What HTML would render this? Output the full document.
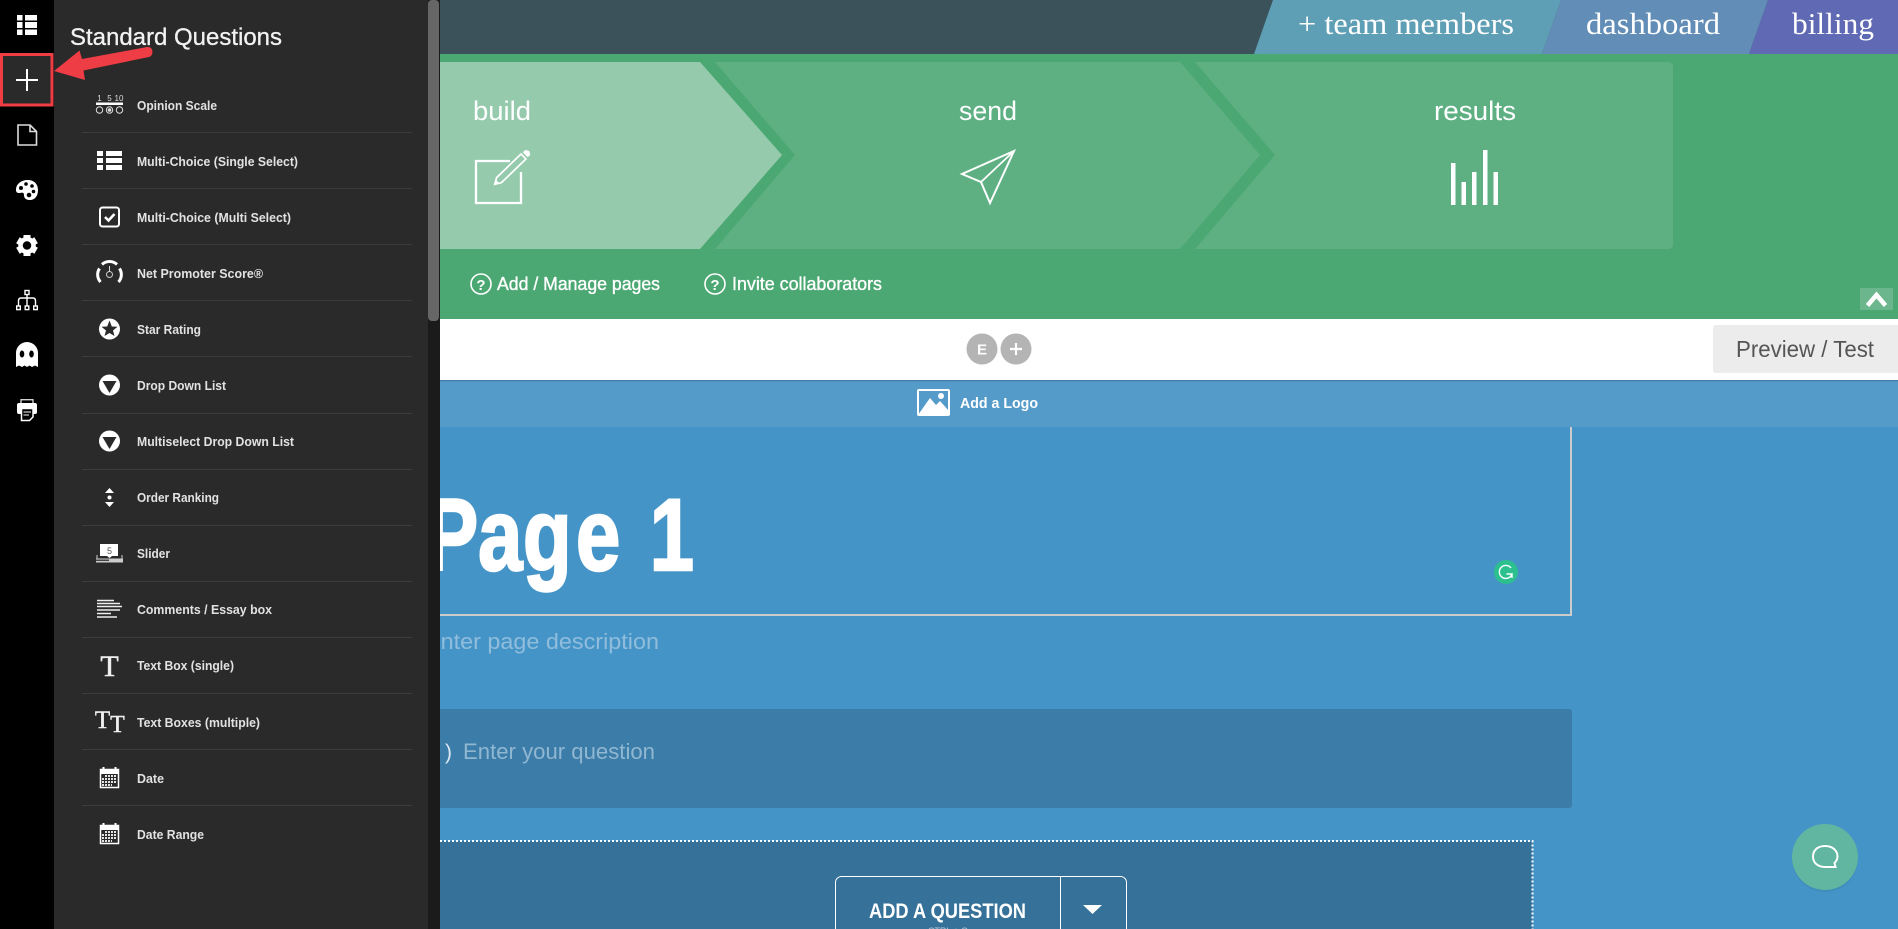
<!DOCTYPE html>
<html lang="en"><head><meta charset="utf-8"><title>Survey builder</title>
<style>
html,body{margin:0;padding:0;width:1898px;height:929px;overflow:hidden;background:#4594c7}
svg{display:block}
text{font-family:"Liberation Sans",Arial,sans-serif}
.s{font-family:"Liberation Serif",serif}
.i{font-size:13px;fill:#e2e2e2;font-weight:bold}
.l{stroke:#3d3d3d;stroke-width:1}
.w{fill:#fff}
</style></head><body>
<svg width="1898" height="929" viewBox="0 0 1898 929">
<rect width="1898" height="929" fill="#4594c7"/>
<!-- top nav -->
<rect width="1898" height="54" fill="#3b525a"/>
<polygon points="1273,0 1561,0 1542,54 1254,54" fill="#5f9fb5"/>
<polygon points="1561,0 1768,0 1749,54 1542,54" fill="#618db6"/>
<polygon points="1768,0 1898,0 1898,54 1749,54" fill="#5f69b4"/>
<text class="s w" x="1298" y="34" font-size="31" textLength="216" lengthAdjust="spacingAndGlyphs">+ team members</text>
<text class="s w" x="1586" y="34" font-size="31" textLength="134" lengthAdjust="spacingAndGlyphs">dashboard</text>
<text class="s w" x="1792" y="34" font-size="31" textLength="82" lengthAdjust="spacingAndGlyphs">billing</text>
<!-- green -->
<rect y="54" width="1898" height="265" fill="#4ca873"/>
<polygon points="440,62 700,62 782,155 700,249 440,249" fill="#95cbac"/>
<polygon points="715,62 1180,62 1260,155 1180,249 715,249 795,155" fill="#5eb083"/>
<polygon points="1195,62 1670,62 1673,65 1673,246 1670,249 1195,249 1275,155" fill="#5eb083"/>
<text class="w" x="473" y="120" font-size="27" textLength="58" lengthAdjust="spacingAndGlyphs">build</text>
<text class="w" x="959" y="120" font-size="27" textLength="58" lengthAdjust="spacingAndGlyphs">send</text>
<text class="w" x="1434" y="120" font-size="27" textLength="82" lengthAdjust="spacingAndGlyphs">results</text>
<path d="M510 161H476V203H521V172" fill="none" stroke="#fff" stroke-width="2.300"/>
<g transform="translate(494 185) rotate(-44)"><path d="M1 0L7-3.500H41V3.500H7Z" fill="none" stroke="#fff" stroke-width="1.700"/><path d="M0 0L5-2.500V2.500Z" fill="#fff"/><path d="M43.500-3.500H47L49 0 47 3.500H43.500Z" fill="#fff"/></g>
<path d="M1014 151L962 174L981 182L990 203Z" fill="none" stroke="#fff" stroke-width="2" stroke-linejoin="miter"/>
<path d="M981 182L1014 151" fill="none" stroke="#fff" stroke-width="1.800"/>
<rect x="1451" y="163" width="4.500" height="42" fill="#fff"/><rect x="1461.500" y="182" width="4.500" height="23" fill="#fff"/><rect x="1472" y="172" width="4.500" height="33" fill="#fff"/><rect x="1483" y="150" width="4.500" height="55" fill="#fff"/><rect x="1493.500" y="172" width="4.500" height="33" fill="#fff"/>
<circle cx="481" cy="284" r="10" fill="none" stroke="#fff" stroke-width="1.600"/>
<text class="w" x="481" y="290" font-size="15" text-anchor="middle" font-weight="bold">?</text>
<text class="w" x="497" y="290" font-size="18" textLength="163" lengthAdjust="spacingAndGlyphs" stroke="#fff" stroke-width=".35">Add / Manage pages</text>
<circle cx="715" cy="284" r="10" fill="none" stroke="#fff" stroke-width="1.600"/>
<text class="w" x="715" y="290" font-size="15" text-anchor="middle" font-weight="bold">?</text>
<text class="w" x="732" y="290" font-size="18" textLength="150" lengthAdjust="spacingAndGlyphs" stroke="#fff" stroke-width=".35">Invite collaborators</text>
<rect x="1860" y="288" width="33" height="22" fill="#6cb68e"/>
<path d="M1867.500 305.500L1876.500 295L1885.500 305.500" fill="none" stroke="#fff" stroke-width="4.500"/>
<!-- white bar -->
<rect y="319" width="1898" height="61" fill="#fff"/>
<circle cx="982" cy="349" r="15.500" fill="#b4b4b4"/><circle cx="1016" cy="349" r="15.500" fill="#b4b4b4"/>
<text class="w" x="982" y="354.500" font-size="15" font-weight="bold" text-anchor="middle">E</text>
<path d="M1010 349H1022M1016 343V355" stroke="#fff" stroke-width="2.200"/>
<rect x="1713" y="325" width="190" height="48" rx="3" fill="#ececec"/>
<text x="1736" y="357" font-size="23" fill="#555" textLength="138" lengthAdjust="spacingAndGlyphs">Preview / Test</text>
<!-- blue header -->
<rect y="380" width="1898" height="47" fill="#559bca"/>
<rect y="380" width="1898" height="1" fill="#457ea8"/><rect y="381" width="1898" height="1" fill="#4d8fbd"/>
<rect x="918" y="390" width="31" height="25" rx="1" fill="none" stroke="#fff" stroke-width="2"/>
<path d="M918 415L930 398L936 405L940 401L949 411V415Z" fill="#fff"/><circle cx="941" cy="396" r="3" fill="#fff"/>
<text class="w" x="960" y="408" font-size="15" font-weight="bold" textLength="78" lengthAdjust="spacingAndGlyphs">Add a Logo</text>
<!-- page title -->
<path d="M1571 427V615H440" fill="none" stroke="#ccc" stroke-width="2"/>
<text class="w" transform="scale(.78 1)" x="545 613 670.500 738.500 800 833" y="570" font-size="102" font-weight="bold" stroke="#fff" stroke-width="2.500">Page 1</text>
<circle cx="1506" cy="572" r="12" fill="#2dc08f"/>
<path d="M1511 568A6.500 6.500 0 1 0 1512 574H1506.500M1512 574V578" fill="none" stroke="#fff" stroke-width="1.400"/>
<text x="425" y="649" font-size="22" fill="#90bddc" textLength="234" lengthAdjust="spacingAndGlyphs">Enter page description</text>
<!-- question -->
<rect x="400" y="709" width="1172" height="99" rx="3" fill="#3c7ca8"/>
<text x="445" y="759" font-size="21" fill="#dbe8f1">)</text>
<text x="463" y="759" font-size="22" fill="#90b7d1" textLength="192" lengthAdjust="spacingAndGlyphs">Enter your question</text>
<rect x="400" y="841" width="1132.500" height="120" fill="#367199" stroke="#fff" stroke-width="2" stroke-dasharray="2 2"/>
<rect x="835.500" y="876.500" width="291" height="70" rx="6" fill="none" stroke="#fff"/>
<path d="M1060.500 877V929" stroke="#fff"/>
<text class="w" x="869" y="918" font-size="21" font-weight="bold" textLength="157" lengthAdjust="spacingAndGlyphs">ADD A QUESTION</text>
<polygon points="1083,905 1102,905 1092.500,914" fill="#fff"/>
<text x="928" y="934" font-size="9" fill="#bcd" textLength="40" lengthAdjust="spacingAndGlyphs">CTRL + Q</text>
<!-- chat -->
<circle cx="1825" cy="859" r="33" fill="#3a85b3" opacity=".5"/>
<circle cx="1825" cy="857" r="33" fill="#60b6a0"/>
<path d="M1825 846C1817.500 846 1813 850.500 1813 856.500S1817.500 867 1825 867H1835.500L1834.500 863C1836.500 861 1837.500 859 1837.500 856.500C1837.500 850.500 1832.500 846 1825 846Z" fill="none" stroke="#fff" stroke-width="2"/>
<!-- left rail -->
<rect width="54" height="929" fill="#000"/>
<g fill="#fff"><rect x="17" y="15" width="5.500" height="5.500"/><rect x="25" y="15" width="12" height="5.500"/><rect x="17" y="22" width="5.500" height="6"/><rect x="25" y="22" width="12" height="6"/><rect x="17" y="29.500" width="5.500" height="5.500"/><rect x="25" y="29.500" width="12" height="5.500"/></g>
<rect x="1.500" y="54.500" width="50.500" height="50.500" fill="#2a2a2a" stroke="#ee3e44" stroke-width="3"/>
<path d="M16 80H38M27 69V91" stroke="#fff" stroke-width="2"/>
<path d="M18 125H30L36.500 131.500V145H18ZM30 125V131.500H36.500" fill="none" stroke="#ddd" stroke-width="1.600"/>
<path d="M28 180C21 180 16 184 16 190C16 193 18 193 20 193C23 192 24 193 24 195C24 199 27 200 30 200C35 200 38 196 38 190C38 184 34 180 28 180Z" fill="#fff"/>
<g fill="#000"><circle cx="21" cy="188" r="2"/><circle cx="26" cy="184" r="1.800"/><circle cx="32" cy="186" r="1.800"/><circle cx="33.500" cy="191.500" r="1.800"/><circle cx="29" cy="195" r="2.300"/></g>
<circle cx="27" cy="245.500" r="6.500" fill="none" stroke="#fff" stroke-width="4.500"/>
<g fill="#fff"><rect x="23.500" y="235" width="7" height="6"/><rect x="23.500" y="235" width="7" height="6" transform="rotate(60 27 245.500)"/><rect x="23.500" y="235" width="7" height="6" transform="rotate(120 27 245.500)"/><rect x="23.500" y="235" width="7" height="6" transform="rotate(180 27 245.500)"/><rect x="23.500" y="235" width="7" height="6" transform="rotate(240 27 245.500)"/><rect x="23.500" y="235" width="7" height="6" transform="rotate(300 27 245.500)"/></g>
<g fill="none" stroke="#fff"><rect x="25" y="290.500" width="4" height="4" stroke-width="1.400"/><rect x="16.700" y="306" width="3.600" height="3.600" stroke-width="1.400"/><rect x="25.200" y="306" width="3.600" height="3.600" stroke-width="1.400"/><rect x="33.700" y="306" width="3.600" height="3.600" stroke-width="1.400"/><path d="M27 295V306M18.500 305.500V301Q18.500 298 21 298H33Q35.500 298 35.500 301V305.500" stroke-width="1.400"/></g>
<path d="M16 367V353A11 11 0 0 1 38 353V367L35 365.500 32 367 29.500 365.500 27 367 24.500 365.500 22 367 19 365.500Z" fill="#fff"/>
<ellipse cx="22" cy="354" rx="2.300" ry="3.500" fill="#000"/><ellipse cx="31.500" cy="354" rx="2.300" ry="3.500" fill="#000"/>
<rect x="21" y="399.700" width="12" height="5" fill="none" stroke="#ddd" stroke-width="1.300"/>
<rect x="17" y="403" width="20" height="11" rx="2" fill="#fff"/>
<path d="M21.500 408.500H33V417L29.500 420.500H21.500Z" fill="#000" stroke="#fff" stroke-width="1.500"/>
<path d="M23.500 412H31M23.500 415H29" stroke="#fff" stroke-width="1.100"/>
<!-- panel -->
<rect x="54" width="374" height="929" fill="#2a2a2a"/>
<rect x="428" width="12" height="929" fill="#1b1b1b"/>
<rect x="428" width="11" height="321" rx="4" fill="#666"/>
<text x="70" y="45" font-size="24" fill="#f2f2f2" textLength="212" lengthAdjust="spacingAndGlyphs" stroke="#f2f2f2" stroke-width=".3">Standard Questions</text>
<path class="l" d="M82 132.500H412M82 188.500H412M82 244.500H412M82 300.500H412M82 356.500H412M82 413.500H412M82 469.500H412M82 525.500H412M82 581.500H412M82 637.500H412M82 693.500H412M82 749.500H412M82 805.500H412"/>
<text class="i" x="137" y="110" textLength="80" lengthAdjust="spacingAndGlyphs">Opinion Scale</text>
<text class="i" x="137" y="166" textLength="161" lengthAdjust="spacingAndGlyphs">Multi-Choice (Single Select)</text>
<text class="i" x="137" y="222" textLength="154" lengthAdjust="spacingAndGlyphs">Multi-Choice (Multi Select)</text>
<text class="i" x="137" y="278" textLength="126" lengthAdjust="spacingAndGlyphs">Net Promoter Score®</text>
<text class="i" x="137" y="334" textLength="64" lengthAdjust="spacingAndGlyphs">Star Rating</text>
<text class="i" x="137" y="390" textLength="89" lengthAdjust="spacingAndGlyphs">Drop Down List</text>
<text class="i" x="137" y="446" textLength="157" lengthAdjust="spacingAndGlyphs">Multiselect Drop Down List</text>
<text class="i" x="137" y="502" textLength="82" lengthAdjust="spacingAndGlyphs">Order Ranking</text>
<text class="i" x="137" y="558" textLength="33" lengthAdjust="spacingAndGlyphs">Slider</text>
<text class="i" x="137" y="614" textLength="135" lengthAdjust="spacingAndGlyphs">Comments / Essay box</text>
<text class="i" x="137" y="670" textLength="97" lengthAdjust="spacingAndGlyphs">Text Box (single)</text>
<text class="i" x="137" y="727" textLength="123" lengthAdjust="spacingAndGlyphs">Text Boxes (multiple)</text>
<text class="i" x="137" y="783" textLength="27" lengthAdjust="spacingAndGlyphs">Date</text>
<text class="i" x="137" y="839" textLength="67" lengthAdjust="spacingAndGlyphs">Date Range</text>
<!-- panel icons -->
<g fill="#ddd" font-size="8" text-anchor="middle"><text x="99.500" y="101">1</text><text x="109.500" y="101">5</text><text x="119" y="101">10</text></g>
<rect x="96" y="102.500" width="27" height="2.500" fill="#fff"/>
<g fill="none" stroke="#ddd" stroke-width="1"><circle cx="99.500" cy="110" r="3.200"/><circle cx="109.500" cy="110" r="3.200"/><circle cx="119.500" cy="110" r="3.200"/></g><circle cx="109.500" cy="110" r="1.800" fill="#ddd"/>
<g fill="#fff"><rect x="97" y="151" width="6" height="5"/><rect x="106" y="151" width="16" height="5"/><rect x="97" y="158" width="6" height="5"/><rect x="106" y="158" width="16" height="5"/><rect x="97" y="165" width="6" height="5"/><rect x="106" y="165" width="16" height="5"/></g>
<rect x="100" y="207.500" width="19" height="19" rx="2.500" fill="none" stroke="#fff" stroke-width="2"/>
<path d="M105 217L108.500 220.500L114.500 214" fill="none" stroke="#fff" stroke-width="2.600"/>
<path d="M100.500 282A11 11 0 0 1 99.500 268.500M102 264.500A11 11 0 0 1 117 264.500M119.500 268.500A11 11 0 0 1 118.500 282" fill="none" stroke="#fff" stroke-width="3"/>
<circle cx="109.500" cy="274.500" r="3" fill="none" stroke="#ccc"/><path d="M109.500 271.500V266" stroke="#ddd"/>
<circle cx="109.500" cy="329" r="10.500" fill="#fff"/>
<polygon points="109.500,320.500 111.800,326.500 117.500,326.800 113,330.500 114.500,336 109.500,333 104.500,336 106,330.500 101.500,326.800 107.200,326.500" fill="#2a2a2a"/>
<circle cx="109.500" cy="385" r="10.500" fill="#fff"/><polygon points="102.500,381 116.500,381 109.500,393" fill="#2a2a2a"/>
<circle cx="109.500" cy="441" r="10.500" fill="#fff"/><polygon points="102.500,437 116.500,437 109.500,449" fill="#2a2a2a"/>
<polygon points="105,493 114,493 109.500,488" fill="#fff"/><circle cx="109.500" cy="497.500" r="2" fill="#fff"/><polygon points="105,502 114,502 109.500,507" fill="#fff"/>
<path d="M100 544H118V556H112L109.500 558L107 556H100Z" fill="#fff"/>
<text x="109.500" y="554" font-size="9" fill="#555" text-anchor="middle">5</text>
<path d="M97 555V560M122 555V560" stroke="#ccc"/>
<rect x="96" y="558.500" width="27" height="4" fill="#ccc"/><rect x="96" y="559.500" width="13" height="1.500" fill="#444"/>
<path d="M97 600.500H114M97 603.500H120M97 606.500H122M97 610H120M97 613.500H111M97 617H117" stroke="#eee" stroke-width="1.500"/>
<text class="s" x="109.500" y="676" font-size="30" fill="#f0f0f0" stroke="#f0f0f0" stroke-width=".5" text-anchor="middle">T</text>
<text class="s" x="102.500" y="728" font-size="25" fill="#f0f0f0" stroke="#f0f0f0" stroke-width=".4" text-anchor="middle">T</text>
<text class="s" x="117.500" y="732" font-size="24" fill="#f0f0f0" stroke="#f0f0f0" stroke-width=".4" text-anchor="middle">T</text>
<defs><g id="cal"><rect x="100.500" y="769.500" width="18" height="18" fill="none" stroke="#fff" stroke-width="1.500"/><rect x="100" y="769" width="19" height="5" fill="#fff"/><path d="M103.500 767V771M115.500 767V771" stroke="#fff" stroke-width="2"/><path d="M105 776H117M102 779H117M102 782H117M102 785H112" stroke="#fff" stroke-width="1.800" stroke-dasharray="2 1"/></g></defs>
<use href="#cal"/><use href="#cal" y="56"/>
<!-- arrow -->
<path d="M54 71L79.500 50.500L82 59L147 47Q152 46.500 152.500 51.500Q152.500 56 149 57L83.500 70.500L85 80Z" fill="#ef3d46"/>
</svg>
</body></html>
